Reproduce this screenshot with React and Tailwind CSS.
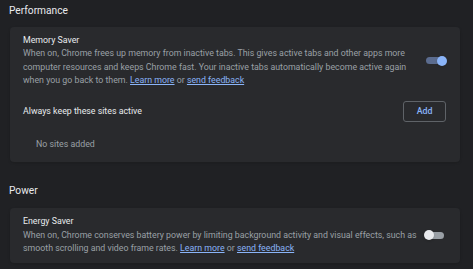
import React from 'react';

const Toggle = ({ on }) => (
    <div className="relative w-[22px] h-[10px] flex items-center shrink-0">
        <div className={`w-[18px] h-[7px] rounded-full ${on ? 'bg-[#5b6c8f] ml-[1px]' : 'bg-[#9aa0a6] ml-[2px]'}`}></div>
        <div
            className={`absolute top-0 w-[10px] h-[10px] rounded-full shadow ${on ? 'right-0 bg-[#8ab4f8]' : 'left-0 bg-[#e8eaed]'}`}
        ></div>
    </div>
);

const Link = ({ children }) => (
    <a href="#" className="text-[#8ab4f8] underline underline-offset-1">{children}</a>
);

const App = () => {
    return (
        <div
            className="w-[473px] h-[269px] bg-[#202124] overflow-hidden text-[#e8eaed]"
            style={{ fontFamily: 'Roboto, "Liberation Sans", sans-serif' }}
        >
            <div className="w-[460px] pl-[10px]">
                {/* Performance */}
                <h2 className="h-[27px] text-[10.2px] leading-[21px] -ml-[1px]">Performance</h2>
                <div className="bg-[#292a2d] rounded-[4px] shadow-sm">
                    <div className="flex items-center justify-between pl-[13px] pr-[13px] py-[7px]">
                        <div className="text-[8.8px] leading-[13.4px]">
                            <div className="text-[#e8eaed]">Memory Saver</div>
                            <div className="text-[#9aa0a6]">
                                When on, Chrome frees up memory from inactive tabs. This gives active tabs and other apps more<br />
                                computer resources and keeps Chrome fast. Your inactive tabs automatically become active again<br />
                                when you go back to them. <Link>Learn more</Link> or <Link>send feedback</Link>
                            </div>
                        </div>
                        <Toggle on />
                    </div>
                    <div className="flex items-center justify-between h-[33px] pl-[13px] pr-[14px]">
                        <span className="text-[8.8px]">Always keep these sites active</span>
                        <button className="w-[43px] h-[21px] border border-[#5f6368] rounded-[3px] text-[8.8px] text-[#8ab4f8] font-medium">
                            Add
                        </button>
                    </div>
                    <div className="h-[34px] flex items-center pl-[26px] text-[8.8px] text-[#9aa0a6]">
                        No sites added
                    </div>
                </div>

                {/* Power */}
                <h2 className="mt-[17px] h-[27px] text-[10.2px] leading-[24px] -ml-[1px]">Power</h2>
                <div className="mt-[2px] bg-[#292a2d] rounded-[4px] shadow-sm">
                    <div className="flex items-center justify-between pl-[13px] pr-[14px] py-[7.5px]">
                        <div className="text-[8.8px] leading-[13.4px]">
                            <div className="text-[#e8eaed]">Energy Saver</div>
                            <div className="text-[#9aa0a6]">
                                When on, Chrome conserves battery power by limiting background activity and visual effects, such as<br />
                                smooth scrolling and video frame rates. <Link>Learn more</Link> or <Link>send feedback</Link>
                            </div>
                        </div>
                        <Toggle />
                    </div>
                </div>
            </div>
        </div>
    );
};

export default App;
